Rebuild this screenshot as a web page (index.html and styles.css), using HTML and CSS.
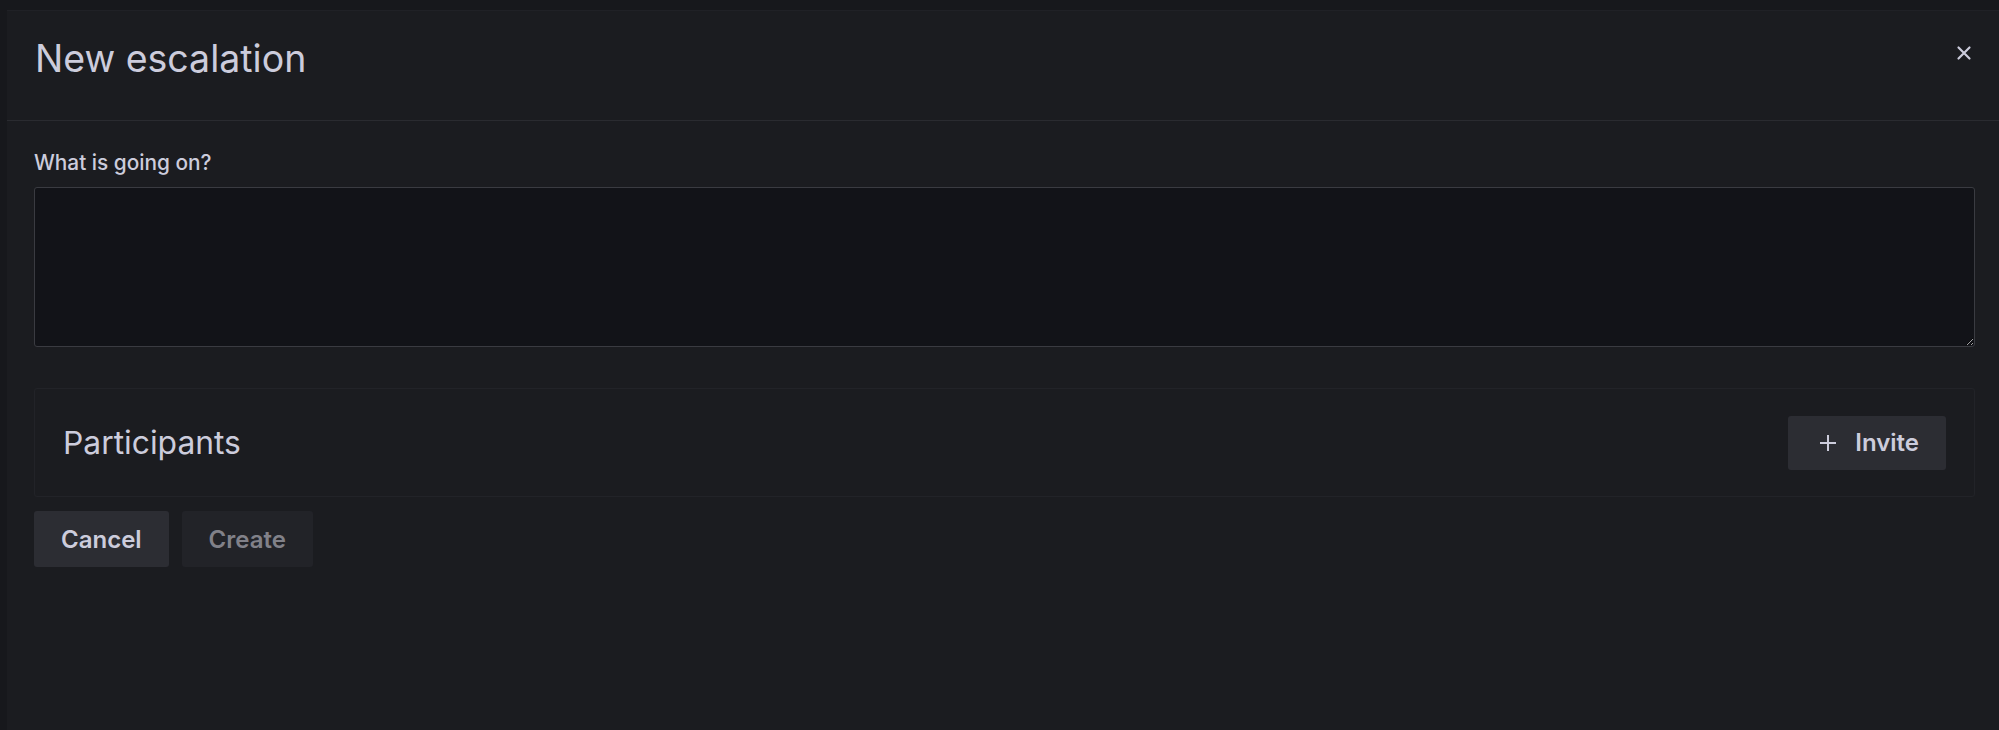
FILE: index.html
```html
<!DOCTYPE html>
<html lang="en">
<head>
<meta charset="utf-8">
<title>New escalation</title>
<link rel="stylesheet" href="styles.css">
</head>
<body>
<div class="page">
  <aside class="drawer">
    <header class="drawer-header">
      <h2 class="drawer-title">New escalation</h2>
      <button class="close-btn" aria-label="Close">
        <svg width="16" height="16" viewBox="0 0 16 16"><path d="M2.5 2.5 L13.5 13.5 M13.5 2.5 L2.5 13.5" stroke="#ccccdc" stroke-width="2.2" stroke-linecap="round"/></svg>
      </button>
    </header>
    <div class="drawer-body">
      <label class="field-label" for="what">What is going on?</label>
      <textarea id="what" class="field-textarea"></textarea>
      <section class="participants">
        <h3 class="participants-title">Participants</h3>
        <button class="btn btn-secondary invite">
          <svg width="20" height="20" viewBox="0 0 20 20"><path d="M10 2 V18 M2 10 H18" stroke="#ccccdc" stroke-width="2"/></svg>
          <span>Invite</span>
        </button>
      </section>
      <div class="actions">
        <button class="btn btn-secondary">Cancel</button>
        <button class="btn btn-disabled" disabled>Create</button>
      </div>
    </div>
  </aside>
</div>
</body>
</html>
```

FILE: styles.css
```css
* { box-sizing: border-box; }
html, body { margin: 0; padding: 0; }
body {
  background: #16171b;
  font-family: Inter, "Noto Sans", sans-serif;
  color: #ccccdc;
  width: 1999px;
  height: 730px;
  overflow: hidden;
}
.page {
  height: 730px;
  padding-top: 10px;
  padding-left: 7px;
  background: #17181c;
}
.drawer {
  height: 720px;
  background: #1b1c20;
  border-top: 1px solid #202126;
  display: flex;
  flex-direction: column;
}
.drawer-header {
  height: 110px;
  flex: none;
  display: flex;
  align-items: center;
  justify-content: space-between;
  padding: 0 27px 0 28px;
  border-bottom: 1px solid #2a2b30;
}
.drawer-title {
  margin: 0;
  margin-top: -14px;
  font-size: 37.5px;
  font-weight: 400;
  color: #ccccdc;
}
.close-btn {
  background: none;
  border: 0;
  padding: 0;
  width: 16px;
  height: 16px;
  margin-top: -26px;
  display: flex;
}
.drawer-body {
  padding: 30px 24px 0 27px;
  display: flex;
  flex-direction: column;
}
.field-label {
  font-size: 20.8px;
  line-height: 24px;
  font-weight: 500;
  color: #ccccdc;
}
.field-textarea {
  margin-top: 12px;
  height: 160px;
  width: 100%;
  background: #121318;
  border: 1px solid #3a3b41;
  border-radius: 3px;
  resize: vertical;
  color: #ccccdc;
  font-family: inherit;
  font-size: 20px;
  outline: none;
}
.participants {
  margin-top: 41px;
  height: 109px;
  border: 1px solid #222328;
  border-radius: 3px;
  display: flex;
  align-items: center;
  justify-content: space-between;
  padding: 0 28px 0 28px;
}
.participants-title {
  margin: 0;
  font-size: 31.8px;
  font-weight: 400;
  color: #ccccdc;
}
.btn {
  font-family: inherit;
  border: 0;
  border-radius: 3px;
  font-size: 24px;
  font-weight: 600;
  height: 56px;
  display: inline-flex;
  align-items: center;
  gap: 17px;
  padding: 0 27px;
}
.btn-secondary {
  background: #2c2d33;
  color: #ccccdc;
}
.btn-disabled {
  background: #222328;
  color: #818189;
}
.invite {
  height: 54px;
  padding: 0 27px 0 30px;
}
.actions {
  margin-top: 14px;
  display: flex;
  gap: 13px;
}
```
